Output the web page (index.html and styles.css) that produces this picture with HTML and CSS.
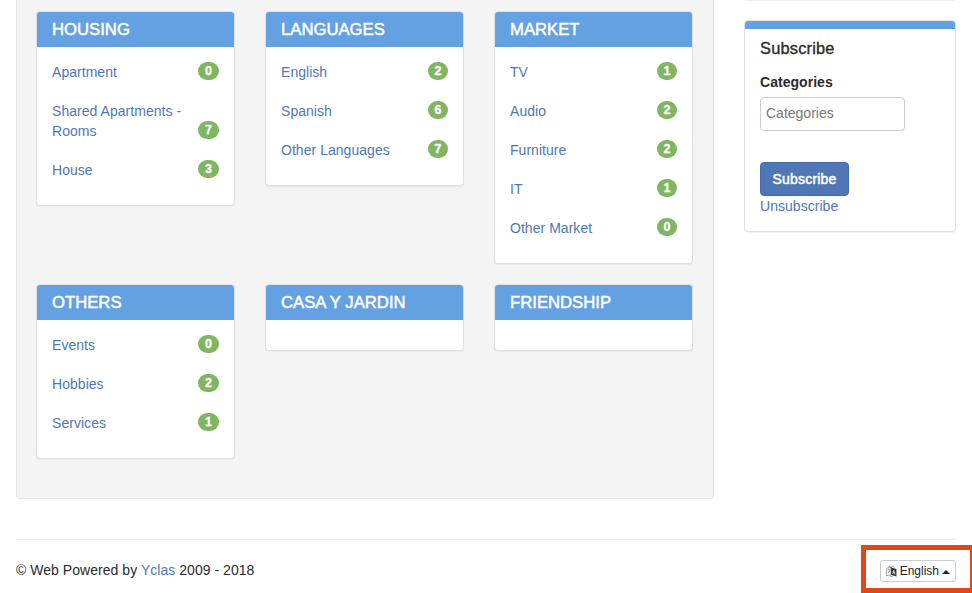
FILE: index.html
```html
<!DOCTYPE html>
<html lang="en">
<head>
<meta charset="utf-8">
<title>Categories</title>
<link rel="stylesheet" href="styles.css">
</head>
<body>
<div class="container">
  <div class="columns">
    <main class="well">
      <section class="panel">
        <h2 class="panel-heading">HOUSING</h2>
        <div class="panel-body">
          <ul class="list wide">
            <li><a href="#">Apartment</a><span class="badge">0</span></li>
            <li><a href="#">Shared Apartments - Rooms</a><span class="badge">7</span></li>
            <li><a href="#">House</a><span class="badge">3</span></li>
          </ul>
        </div>
      </section>
      <section class="panel">
        <h2 class="panel-heading">LANGUAGES</h2>
        <div class="panel-body">
          <ul class="list">
            <li><a href="#">English</a><span class="badge">2</span></li>
            <li><a href="#">Spanish</a><span class="badge">6</span></li>
            <li><a href="#">Other Languages</a><span class="badge">7</span></li>
          </ul>
        </div>
      </section>
      <section class="panel">
        <h2 class="panel-heading">MARKET</h2>
        <div class="panel-body">
          <ul class="list">
            <li><a href="#">TV</a><span class="badge">1</span></li>
            <li><a href="#">Audio</a><span class="badge">2</span></li>
            <li><a href="#">Furniture</a><span class="badge">2</span></li>
            <li><a href="#">IT</a><span class="badge">1</span></li>
            <li><a href="#">Other Market</a><span class="badge">0</span></li>
          </ul>
        </div>
      </section>
      <section class="panel">
        <h2 class="panel-heading">OTHERS</h2>
        <div class="panel-body">
          <ul class="list wide">
            <li><a href="#">Events</a><span class="badge">0</span></li>
            <li><a href="#">Hobbies</a><span class="badge">2</span></li>
            <li><a href="#">Services</a><span class="badge">1</span></li>
          </ul>
        </div>
      </section>
      <section class="panel">
        <h2 class="panel-heading">CASA Y JARDIN</h2>
        <div class="panel-body"></div>
      </section>
      <section class="panel">
        <h2 class="panel-heading">FRIENDSHIP</h2>
        <div class="panel-body"></div>
      </section>
    </main>
    <aside class="sidebar">
      <div class="panel-end"></div>
      <form class="panel subscribe">
        <h3>Subscribe</h3>
        <label for="categories">Categories</label>
        <input id="categories" type="text" placeholder="Categories">
        <button type="button" class="btn-primary">Subscribe</button>
        <a href="#">Unsubscribe</a>
      </form>
    </aside>
  </div>
  <footer class="footer">
    <p>© Web Powered by <a href="#">Yclas</a> 2009 - 2018</p>
    <div class="language">
      <button type="button" class="btn-language">
        <svg class="icon" viewBox="0 0 12 12" aria-hidden="true">
          <path d="M.7 2.3 6 .7v8.6L.7 10.9z" fill="#fff" stroke="#555" stroke-width=".6"/>
          <path d="M2 4.1 4.8 3.3M3.4 2.8v1M4.5 3.7C4.2 5.6 3.3 7 2 7.8M2.4 5c.6 1 1.4 1.6 2.5 2" fill="none" stroke="#555" stroke-width=".6"/>
          <path d="M5.6 1.6 11.8 3.2v8.4L5.6 9.8z" fill="#333"/>
          <path d="M7.3 8.6 8.7 4.6l1.6 5M7.9 7.2l1.8.5" fill="none" stroke="#fff" stroke-width=".8"/>
          <path d="M3 .5 6.5 1.6M6.5.8c1.3-.5 2.4-.1 3.2.8M4 11c1.1.7 2.6.7 3.7.1" fill="none" stroke="#444" stroke-width=".6"/>
        </svg>
        <span>English</span>
        <span class="caret"></span>
      </button>
    </div>
  </footer>
</div>
</body>
</html>
```

FILE: styles.css
```css
* { box-sizing: border-box; }
html { overflow: hidden; }
body {
  margin: 0;
  height: 593px;
  overflow: hidden;
  background: #fff;
  color: #2b2b2b;
  font: 14px/20px "Liberation Sans", Arial, sans-serif;
  letter-spacing: .04px;
}
a { color: #4f77b5; text-decoration: none; }
h2, h3, p, ul { margin: 0; }
.container { width: 940px; margin-left: 16px; }
.columns { display: flex; justify-content: space-between; align-items: flex-start; }
.well {
  width: 698px;
  height: 499px;
  padding: 11px 20px 0 19px;
  display: grid;
  grid-template-columns: repeat(3, 199px);
  grid-template-rows: 253px auto;
  gap: 20px 30px;
  align-items: start;
  background: #f4f4f4;
  border: 1px solid #e3e3e3;
  border-top: 0;
  border-radius: 0 0 4px 4px;
}
.panel {
  background: #fff;
  border: 1px solid #e0e0e0;
  border-radius: 4px;
  box-shadow: 0 1px 1px rgba(0, 0, 0, .05);
}
.panel-heading {
  height: 35px;
  padding-left: 15px;
  border-radius: 3px 3px 0 0;
  background: #64a1e3;
  color: #fff;
  font-size: 16.7px;
  font-weight: 400;
  line-height: 35px;
  letter-spacing: 0;
  -webkit-text-stroke: .5px #fff;
}
.panel-body { padding: 15px; }
.list {
  display: grid;
  gap: 19px;
  padding: 0 0 10px;
  list-style: none;
}
.list li { display: flex; justify-content: space-between; align-items: flex-end; }
.list a { max-width: 140px; }
.badge {
  width: 20px;
  height: 18px;
  margin-bottom: 2px;
  border-radius: 9px;
  background: #80b561;
  color: #fff;
  font-size: 12.5px;
  font-weight: 700;
  line-height: 18px;
  text-align: center;
  -webkit-text-stroke: .3px #fff;
}
.wide .badge { width: 21px; }
.sidebar { width: 212px; }
.panel-end { height: 1px; margin: 0 1px 19px; background: #eee; }
.subscribe {
  height: 212px;
  padding: 8px 15px 0;
  display: flex;
  flex-direction: column;
  align-items: flex-start;
  background: linear-gradient(#64a1e3 8px, #fff 8px);
}
.subscribe h3 {
  margin-top: 9px;
  font-size: 16.4px;
  font-weight: 400;
  letter-spacing: .2px;
  -webkit-text-stroke: .35px #2b2b2b;
}
.subscribe label { margin-top: 14px; font-weight: 700; }
.subscribe input {
  width: 145px;
  height: 34px;
  margin: 5px 0 31px;
  padding: 0 5px 2px;
  border: 1px solid #ccc;
  border-radius: 4px;
  font: inherit;
}
.subscribe input::placeholder { color: #777; }
.btn-primary {
  width: 89px;
  height: 34px;
  padding: 0;
  border: 1px solid #456ba6;
  border-radius: 4px;
  background: #4f77b5;
  color: #fff;
  font: inherit;
  letter-spacing: .2px;
  -webkit-text-stroke: .5px #fff;
}
.footer {
  height: 60px;
  margin-top: 40px;
  display: flex;
  justify-content: space-between;
  border-top: 1px solid #eee;
}
.footer p { margin-top: 20px; }
.language {
  flex: none;
  width: 114px;
  height: 48px;
  margin: 5px -19px 0 0;
  padding: 10px 0 0 14px;
  border: 5px solid #df4618;
}
.btn-language {
  display: flex;
  align-items: center;
  width: 76px;
  height: 22px;
  padding: 0 5px;
  border: 1px solid #ccc;
  border-radius: 3px;
  background: #fff;
  color: #222;
  font: 12px/18px "Liberation Sans", Arial, sans-serif;
}
.icon { width: 11px; height: 11px; margin-right: 3px; }
.caret {
  margin: 2px 0 0 3px;
  border: 4px solid transparent;
  border-top: 0;
  border-bottom-color: #222;
}
```
